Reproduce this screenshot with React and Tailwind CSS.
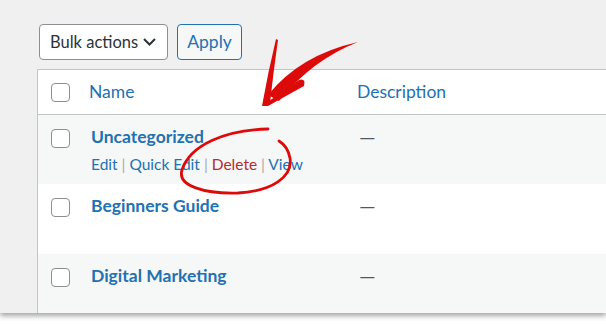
import React from 'react';

const rows = [
  { name: 'Uncategorized', actions: true, bg: 'bg-[#f6f7f7]', h: 'h-[69px]' },
  { name: 'Beginners Guide', bg: 'bg-white', h: 'h-[70px]' },
  { name: 'Digital Marketing', bg: 'bg-[#f6f7f7]', h: 'h-[70px]' },
];

const Checkbox = () => (
  <div className="w-[19px] h-[19px] rounded-[4px] border border-[#8c8f94] bg-white" />
);

const Annotations = () => (
  <svg className="absolute inset-0 pointer-events-none" width="606" height="313" viewBox="0 0 606 313">
    {/* arrow */}
    <path d="M268 95 Q300 55 358 42 Q312 60 279 101 Z" fill="#dd0a0a" />
    <path d="M276 39 L278 40 Q273 75 270 104 L262 106 Q268 72 276 39 Z" fill="#dd0a0a" />
    <path d="M262 106 L299 80 Q306 78 304 86 L268 106 Z" fill="#dd0a0a" />
    {/* circle */}
    <path
      d="M268 129 C225 130 190 145 182 170 C177 186 205 194 238 193 C272 191 293 177 290 158 C288 148 284 144 279 141"
      fill="none"
      stroke="#dd0a0a"
      strokeWidth="2.8"
      strokeLinecap="round"
    />
  </svg>
);

const App = () => {
  return (
    <div className="w-[606px] h-[324px] bg-white font-['Lato',sans-serif]">
      <div className="relative h-[313px] bg-[#f0f0f1] overflow-hidden shadow-[0_3px_5px_rgba(0,0,0,0.35)] pl-[37px] pt-[24px]">
        {/* Bulk actions */}
        <div className="flex gap-[9px] ml-[2px]">
          <div className="w-[129px] h-[36px] bg-white border border-[#8c8f94] rounded-[4px] flex items-center justify-between pl-[10px] pr-[11px] text-[16.5px] text-[#2c3338] whitespace-nowrap">
            <span>Bulk actions</span>
            <svg width="13" height="8" viewBox="0 0 13 8">
              <polyline points="1,1 6.5,6.5 12,1" fill="none" stroke="#2c3338" strokeWidth="2" />
            </svg>
          </div>
          <div className="w-[65px] h-[36px] bg-[#f6f7f7] border border-[#2271b1] rounded-[4px] flex items-center justify-center text-[17.5px] text-[#2271b1]">
            Apply
          </div>
        </div>

        {/* Table */}
        <div className="mt-[9px] border-l border-t border-[#c3c4c7] bg-white">
          <div className="flex items-center h-[45px] border-b border-[#c3c4c7] text-[17.5px] text-[#2271b1]">
            <div className="w-[51px] pl-[13px]"><Checkbox /></div>
            <div className="w-[268px]">Name</div>
            <div>Description</div>
          </div>
          {rows.map((row) => (
            <div key={row.name} className={`flex ${row.bg} ${row.h} pt-[12px]`}>
              <div className="w-[51px] pl-[13px] pt-[2px]"><Checkbox /></div>
              <div className="w-[268px] pl-[2px]">
                <div className="text-[17.5px] leading-[20px] font-bold text-[#2271b1]">{row.name}</div>
                {row.actions && (
                  <div className="mt-[8px] text-[15.5px] leading-[18px] text-[#2271b1]">
                    Edit <span className="text-[#a7aaad]">|</span> Quick Edit{' '}
                    <span className="text-[#a7aaad]">|</span>{' '}
                    <span className="text-[#b32d2e]">Delete</span>{' '}
                    <span className="text-[#a7aaad]">|</span> View
                  </div>
                )}
              </div>
              <div className="pl-[2px] text-[21px] leading-[20px] text-[#50575e]">—</div>
            </div>
          ))}
        </div>

        <Annotations />
      </div>
    </div>
  );
};

export default App;
